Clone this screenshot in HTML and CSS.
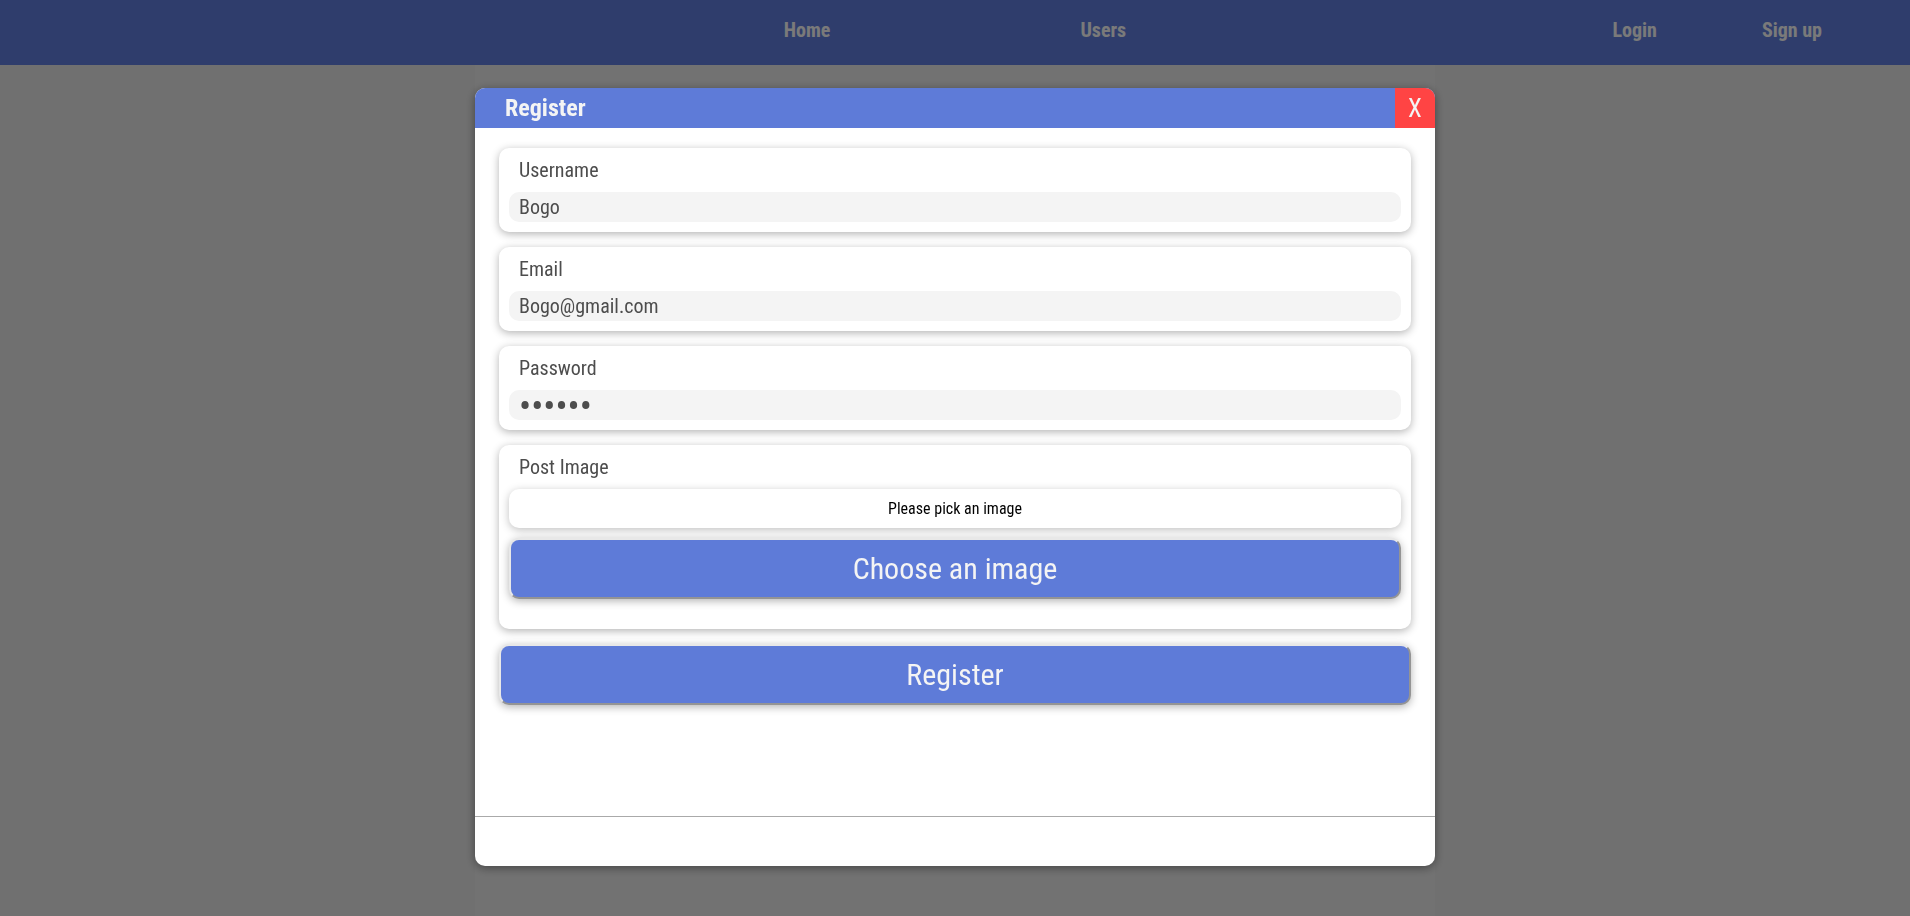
FILE: index.html
```html
<!DOCTYPE html>
<html lang="en">
<head>
<meta charset="utf-8">
<meta name="viewport" content="width=device-width, initial-scale=1">
<title>Register</title>
<link rel="stylesheet" href="styles.css">
</head>
<body>
<header class="topbar">
  <nav class="topbar-main">
    <a href="#home">Home</a>
    <a href="#users">Users</a>
  </nav>
  <nav class="topbar-account">
    <a href="#login">Login</a>
    <a href="#signup">Sign up</a>
  </nav>
</header>
<main class="page"></main>
<div class="backdrop">
  <section class="modal" role="dialog" aria-labelledby="modal-title">
    <header class="modal-header">
      <h2 class="modal-title" id="modal-title">Register</h2>
      <button class="modal-close" type="button" aria-label="Close">X</button>
    </header>
    <form class="modal-body">
      <div class="field">
        <label class="field-label" for="username">Username</label>
        <input class="field-input" id="username" type="text" value="Bogo">
      </div>
      <div class="field">
        <label class="field-label" for="email">Email</label>
        <input class="field-input" id="email" type="email" value="Bogo@gmail.com">
      </div>
      <div class="field">
        <label class="field-label" for="password">Password</label>
        <input class="field-input field-input-password" id="password" type="password" value="secret">
      </div>
      <div class="field field-image">
        <label class="field-label" for="pick">Post Image</label>
        <p class="image-preview">Please pick an image</p>
        <button class="button" id="pick" type="button">Choose an image</button>
      </div>
      <button class="button" type="submit">Register</button>
    </form>
    <footer class="modal-footer"></footer>
  </section>
</div>
</body>
</html>
```
FILE: styles.css
```css
* {
  box-sizing: border-box;
}

body {
  margin: 0;
  min-height: 100vh;
  display: flex;
  flex-direction: column;
  font-family: "Roboto Condensed", Roboto, sans-serif;
  background: #e0e0e0;
}

.topbar {
  display: grid;
  grid-template-columns: 1fr 2fr 1fr;
  height: 65px;
  padding-bottom: 5px;
  align-items: center;
  background: #5e7bd8;
}

.topbar a {
  color: #f4f4f4;
  font-size: 20px;
  font-weight: 700;
  line-height: 24px;
  text-decoration: none;
}

.topbar-main {
  grid-column: 2;
  display: flex;
  justify-content: center;
  gap: 250px;
}

.topbar-account {
  display: flex;
  justify-content: flex-end;
  gap: 105px;
  padding-right: 88px;
}

.page {
  flex: 1;
  width: 100%;
  max-width: 960px;
  margin: 0 auto;
  background: #e4e4e4;
}

.backdrop {
  position: fixed;
  inset: 0;
  display: flex;
  justify-content: center;
  padding: 88px 0 50px;
  background: rgba(0, 0, 0, 0.5);
}

.modal {
  display: flex;
  flex-direction: column;
  width: 100%;
  max-width: 960px;
  border-radius: 10px;
  overflow: hidden;
  background: #fff;
  box-shadow: 0 2px 10px rgba(0, 0, 0, 0.4);
}

.modal-header {
  display: flex;
  flex: none;
  height: 40px;
  align-items: center;
  justify-content: space-between;
  padding-left: 30px;
  background: #5e7bd8;
}

.modal-title {
  margin: 0;
  color: #f4f4f4;
  font-size: 24px;
  line-height: 28px;
}

.modal-close {
  width: 40px;
  height: 40px;
  padding: 0;
  border: 0;
  background: #ff4444;
  color: #f4f4f4;
  font: 25px "Roboto Condensed", Roboto, sans-serif;
}

.modal-body {
  display: flex;
  flex: 1;
  flex-direction: column;
  gap: 15px;
  padding: 20px 24px;
}

.field {
  display: flex;
  flex-direction: column;
  gap: 10px;
  padding: 10px;
  border-radius: 10px;
  background: #fff;
  box-shadow: 0 2px 8px rgba(0, 0, 0, 0.3);
}

.field-image {
  padding-bottom: 30px;
}

.field-label {
  padding: 0 10px;
  color: #4d4d4d;
  font-size: 20px;
  line-height: 24px;
}

.field-input {
  width: 100%;
  height: 30px;
  padding: 0 10px;
  border: 0;
  border-radius: 10px;
  background: #f4f4f4;
  color: #4d4d4d;
  font: 20px/24px "Roboto Condensed", Roboto, sans-serif;
}

.field-input-password {
  padding-top: 4px;
  font-size: 36px;
}

.image-preview {
  margin: 0;
  padding: 10px;
  border-radius: 10px;
  box-shadow: 0 2px 8px rgba(0, 0, 0, 0.25);
  font-size: 16px;
  line-height: 19px;
  text-align: center;
}

.button {
  width: 100%;
  padding: 10px;
  border: 2px outset #e8e8e8;
  border-radius: 10px;
  background: #5e7bd8;
  box-shadow: 0 2px 8px rgba(0, 0, 0, 0.3);
  color: #f4f4f4;
  font: 30px/37px "Roboto Condensed", Roboto, sans-serif;
}

.modal-footer {
  flex: none;
  height: 50px;
  border-top: 1px solid #aaa;
}
```
